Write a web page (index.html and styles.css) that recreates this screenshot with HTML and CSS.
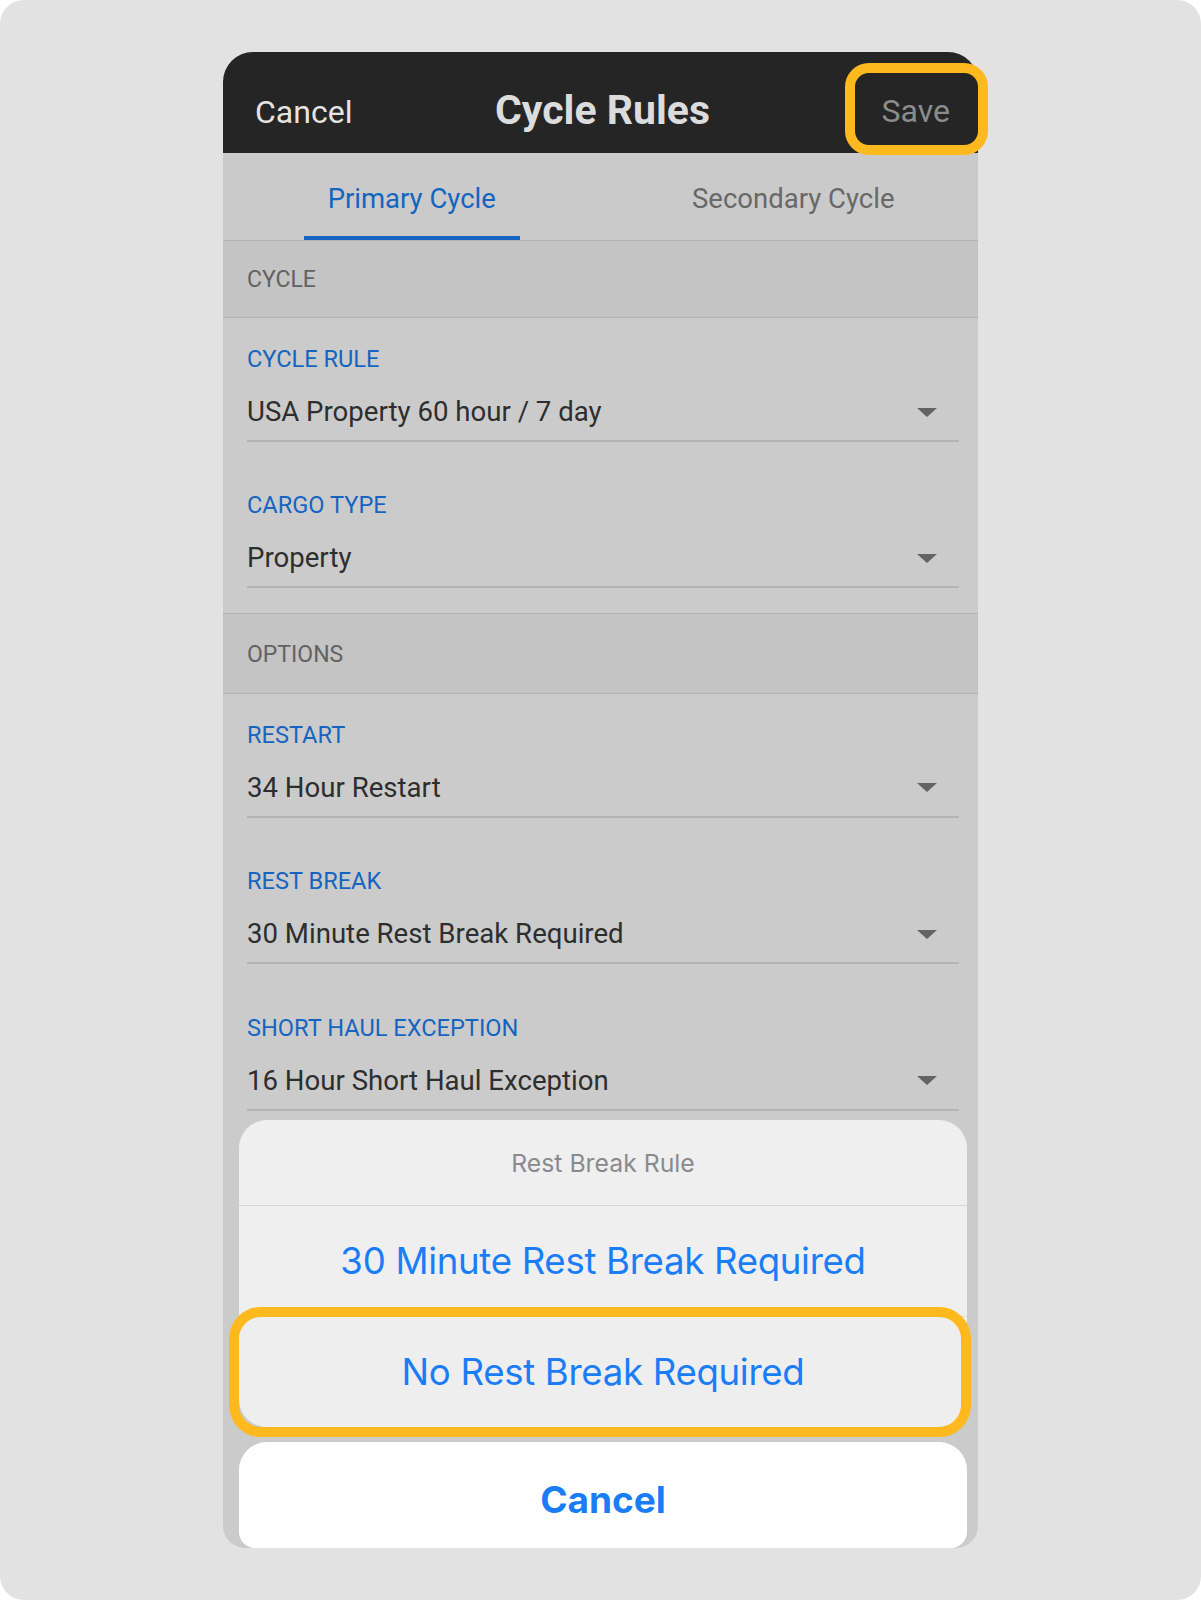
FILE: index.html
```html
<!DOCTYPE html>
<html>
<head>
<meta charset="utf-8">
<link rel="stylesheet" href="styles.css">
</head>
<body>
<div class="frame">
  <div class="phone">
    <header class="topbar">
      <span class="nav-left">Cancel</span>
      <span class="nav-title">Cycle Rules</span>
      <span class="nav-right">Save</span>
    </header>
    <nav class="tabs">
      <div class="tab active"><span>Primary Cycle</span></div>
      <div class="tab second"><span>Secondary Cycle</span></div>
    </nav>
    <div class="section-head">CYCLE</div>
    <div class="group">
      <div class="field">
        <div class="label">CYCLE RULE</div>
        <div class="value"><span>USA Property 60 hour / 7 day</span><i class="caret"></i></div>
      </div>
      <div class="field">
        <div class="label">CARGO TYPE</div>
        <div class="value"><span>Property</span><i class="caret"></i></div>
      </div>
    </div>
    <div class="section-head tall">OPTIONS</div>
    <div class="group open">
      <div class="field">
        <div class="label">RESTART</div>
        <div class="value"><span>34 Hour Restart</span><i class="caret"></i></div>
      </div>
      <div class="field">
        <div class="label">REST BREAK</div>
        <div class="value"><span>30 Minute Rest Break Required</span><i class="caret"></i></div>
      </div>
      <div class="field">
        <div class="label">SHORT HAUL EXCEPTION</div>
        <div class="value"><span>16 Hour Short Haul Exception</span><i class="caret"></i></div>
      </div>
    </div>

    <div class="sheet">
      <div class="sheet-group">
        <div class="sheet-title">Rest Break Rule</div>
        <div class="sheet-option">30 Minute Rest Break Required</div>
        <div class="sheet-option last">No Rest Break Required</div>
      </div>
      <div class="sheet-cancel">Cancel</div>
    </div>
  </div>
  <div class="hl hl-save"></div>
  <div class="hl hl-option"></div>
</div>
</body>
</html>
```

FILE: styles.css
```css
html, body {
  margin: 0;
  padding: 0;
  background: #ffffff;
}

.frame {
  position: relative;
  height: 1600px;
  box-sizing: border-box;
  padding-top: 52px;
  background: #e2e2e2;
  border-radius: 24px;
  font-family: Roboto, "Liberation Sans", sans-serif;
}

.phone {
  position: relative;
  width: 755px;
  height: 1496px;
  margin: 0 auto;
  background: #cbcbcb;
  border-radius: 30px 30px 22px 22px;
  overflow: hidden;
}

/* Header */
.topbar {
  height: 101px;
  box-sizing: border-box;
  padding: 14px 28px 0 32px;
  background: #252525;
  display: grid;
  grid-template-columns: 1fr auto 1fr;
  align-items: center;
}
.nav-left {
  font-size: 32px;
  color: #e4e4e4;
  justify-self: start;
  padding-top: 5px;
}
.nav-title {
  font-size: 41px;
  font-weight: 700;
  color: #dcdcdc;
  justify-self: center;
}
.nav-right {
  font-size: 32px;
  color: #8c8c8c;
  justify-self: end;
  padding-top: 3px;
}

/* Tabs */
.tabs {
  height: 88px;
  box-sizing: border-box;
  display: grid;
  grid-template-columns: 1fr 1fr;
  background: #cacaca;
  border-bottom: 1px solid #b2b2b2;
}
.tab {
  display: flex;
  justify-content: center;
  align-items: center;
  padding-top: 3px;
  font-size: 27.5px;
  color: #686868;
}
.tab.second {
  padding-left: 8px;
}
.tab.active {
  color: #1565c0;
  position: relative;
}
.tab.active::after {
  content: "";
  position: absolute;
  bottom: 0;
  left: 50%;
  width: 216px;
  margin-left: -108px;
  height: 4px;
  background: #1565c0;
}

/* Sections */
.section-head {
  height: 77px;
  box-sizing: border-box;
  padding-left: 24px;
  display: flex;
  align-items: center;
  background: #c4c4c4;
  border-bottom: 1px solid #b2b2b2;
  font-size: 23px;
  color: #626262;
}
.section-head.tall {
  height: 79.5px;
  padding-top: 3px;
}

.group {
  padding: 26px 19px 25px 24px;
  display: flex;
  flex-direction: column;
  gap: 48px;
  background: #cbcbcb;
  border-bottom: 1px solid #b2b2b2;
}
.group.open {
  border-bottom: none;
  gap: 48.5px;
}

.label {
  height: 30px;
  line-height: 30px;
  font-size: 23.6px;
  color: #1565c0;
}

.value {
  margin-top: 18px;
  height: 40px;
  line-height: 40px;
  padding: 0 22px 8px 0;
  border-bottom: 2px solid #b4b4b4;
  display: flex;
  justify-content: space-between;
  align-items: center;
  font-size: 27.6px;
  color: #2e2e2e;
}

.caret {
  width: 0;
  height: 0;
  border-left: 10px solid transparent;
  border-right: 10px solid transparent;
  border-top: 9px solid #636363;
}

/* Action sheet */
.sheet {
  position: absolute;
  left: 16px;
  bottom: 0;
  width: 728px;
  display: flex;
  flex-direction: column;
  gap: 15px;
  font-family: Inter, Roboto, sans-serif;
}
.sheet-group {
  background: #efeff0;
  border-radius: 28px;
  overflow: hidden;
}
.sheet-title {
  height: 85px;
  display: flex;
  align-items: center;
  justify-content: center;
  font-size: 24.8px;
  color: #8a8a8e;
}
.sheet-option {
  height: 110px;
  border-top: 1px solid #d6d6d8;
  display: flex;
  align-items: center;
  justify-content: center;
  font-size: 36.6px;
  color: #1a7df6;
  letter-spacing: -0.3px;
}
.sheet-option.last {
  background: #eeeeee;
  border-top-color: #dcdcdc;
}
.sheet-cancel {
  height: 106px;
  box-sizing: border-box;
  padding-top: 9px;
  background: #ffffff;
  border-radius: 28px 28px 16px 16px;
  display: flex;
  align-items: center;
  justify-content: center;
  font-size: 37px;
  font-weight: 700;
  color: #1a7df6;
}

/* Highlight outlines */
.hl {
  position: absolute;
  box-sizing: border-box;
  border: 10px solid #fdb91e;
}
.hl-save {
  left: 845px;
  top: 63px;
  width: 143px;
  height: 92px;
  border-radius: 24px;
}
.hl-option {
  left: 229px;
  top: 1307px;
  width: 742px;
  height: 130px;
  border-radius: 32px;
}
```
